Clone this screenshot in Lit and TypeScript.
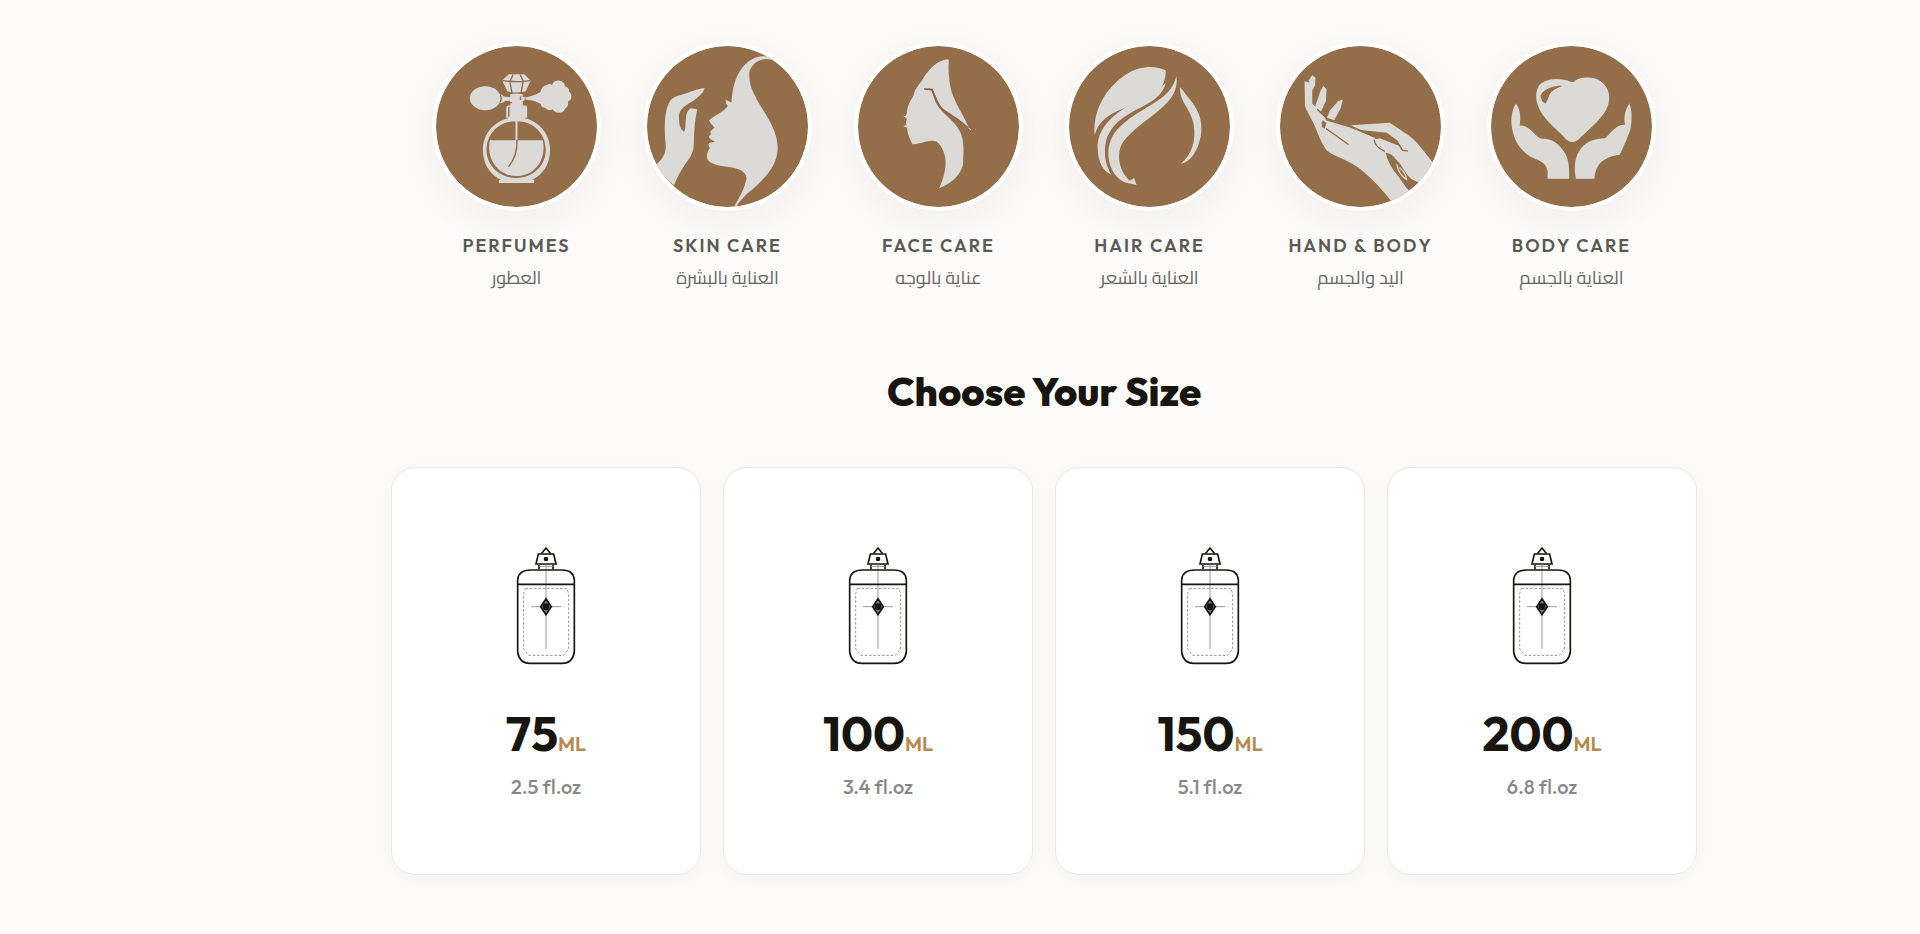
import { LitElement, html, css, svg } from "lit";
import { customElement } from "lit/decorators.js";

interface Category {
  name: string;
  arabic: string;
  viewBox: string;
  art: unknown;
}

const perfume = svg`
  <path class="ink" d="M268 132H314L334 151L318 184Q291 189 264 184L248 151Z"/>
  <path class="cut" d="M249 151Q291 157 333 151M281 133L271 153L277 186M302 133L311 153L305 186" stroke-width="4"/>
  <ellipse class="ink" cx="197" cy="204" rx="46" ry="36"/>
  <path class="ink" d="M238 194Q247 190 251 197Q256 201 272 200V192Q291 188 310 192V200L316 200V209L310 212V226H320Q323 228 323 233V262Q291 268 260 262V233Q260 227 266 226H272V212Q256 211 252 216Q244 222 238 214Z"/>
  <path class="cut" d="M242 195Q248 204 242 215M268 230V260M272 217H278M303 199V209" stroke-width="4"/>
  <path class="ink" d="M317 202Q345 196 363 185Q368 164 383 164Q390 158 398 164Q402 151 418 151Q434 153 437 168Q450 172 449 183Q457 190 456 200Q454 211 446 213Q448 229 438 234Q434 248 418 248Q405 247 400 237Q386 245 377 233Q365 231 364 221Q345 210 318 208Z"/>
  <path class="ink" fill-rule="evenodd" d="M264 264Q291 259 318 264C363 277 392 314 392 359C392 400 372 434 338 449H344V459H238V449H244C210 434 190 400 190 359C190 314 219 277 264 264ZM289 273C238 273 201 310 201 360C201 406 239 444 290 444C341 444 379 406 379 360C379 310 342 273 293 273Z"/>
  <path class="ink" d="M211 330H370C382 387 346 438 291 438C236 438 199 387 211 330Z"/>
  <path class="line" d="M291 264V332" stroke-width="6"/>
  <path class="cut" d="M292 329C294 360 285 389 267 410" stroke-width="4"/>
`;

const skin = svg`
  <path class="ink" d="M224 173C221 188 207 199 189 212C166 226 147 235 147 260C147 282 150 296 162 305C168 296 166 282 168 264C169 247 175 238 184 234L202 237C196 267 193 294 192 326C193 352 189 371 177 387C157 414 144 437 132 466L70 410C96 391 110 370 107 342C103 304 103 257 112 231C119 207 132 200 148 196C174 187 197 177 224 173Z"/>
  <path class="ink" d="M430 90C393 77 366 100 359 124C356 151 364 175 376 197C394 239 443 289 444 354C444 410 397 454 357 487C342 500 329 515 319 530L312 532C329 501 344 477 350 446C350 421 322 414 291 410C265 406 242 402 233 388C228 376 234 363 240 354L235 344L239 338L256 335L240 326L237 319L243 312L241 305L254 292L245 282L237 271C249 257 284 244 294 227L287 216L290 215L286 208L305 217C307 187 312 153 328 126C348 91 385 67 424 82Z"/>
`;

const face = svg`
  <path class="ink" d="M323 87C294 91 270 112 249 146C237 165 225 175 222 193C219 203 208 215 206 224C201 235 202 248 198 257L190 258L201 265L198 278L200 284L190 288L202 293C201 306 209 326 218 342C239 343 258 332 275 332C295 330 306 350 313 370C324 402 313 440 298 475C330 462 358 441 369 407C372 370 374 332 361 305C344 269 304 250 288 217C282 205 280 190 275 180L252 176L277 175C292 201 295 227 314 239C339 256 364 270 388 294C370 252 340 211 332 171C327 145 325 118 327 89Z"/>
  <path class="line" d="M335 259Q364 278 394 299" stroke-width="3"/>
  <path class="cut" d="M253 176L276 178C288 204 292 226 313 242C335 259 358 273 386 294" stroke-width="5"/>
`;

const hair = svg`
  <path class="ink" d="M348 121C318 105 270 106 229 132C173 169 128 234 134 315C144 281 163 261 201 243C241 223 291 215 325 185C339 170 348 146 348 121Z"/>
  <path class="ink" d="M348 157C318 192 277 202 228 231C181 260 141 301 143 354C145 399 159 423 184 434C170 409 162 382 166 347C171 301 203 270 248 245C297 219 337 203 348 157Z"/>
  <path class="ink" d="M380 137C371 176 346 198 307 222C255 253 196 286 180 337C166 382 184 440 226 457L260 465L253 444L240 452C203 420 200 364 220 335C246 299 294 269 331 237C364 210 386 178 380 137Z"/>
  <path class="ink" d="M391 170C388 215 424 235 432 284C439 333 427 373 393 401C424 395 445 360 453 318C463 258 435 226 411 196Z"/>
`;

const hand = svg`
  <path class="ink" d="M135 153L158 159L158 220L194 257L200 271L273 293L345 322C366 330 390 336 410 351C387 368 389 388 403 411C421 437 438 461 449 484L397 515C371 482 341 449 306 420C273 391 228 382 202 361C189 344 183 330 171 301C161 271 145 252 136 227Z"/>
  <path class="ink" d="M147 151L158 134L168 143L166 166L159 180Z"/>
  <path class="ink" d="M166 231L182 184L191 167L201 176L199 212L187 239L181 246Z"/>
  <path class="ink" d="M202 263L211 241L236 212L250 208L243 235L224 270Z"/>
  <path class="ink" d="M275 285L391 278C419 297 450 315 472 337C495 365 510 383 527 407L487 462C462 456 446 441 431 415C419 394 399 376 379 368C363 359 341 350 344 331L357 323L424 349L414 331L382 308L290 298Z"/>
  <path class="cut" d="M344 329Q346 350 376 364M346 324L358 324M418 342L429 360L445 363M277 289L345 320" stroke-width="4"/>
  <path class="cut" d="M173 237L201 264M189 272L197 280L193 292M199 295L267 343" stroke-width="4"/>
  <path class="shade" d="M186 275L201 278L195 296L187 291Z"/>
  <path class="shade" d="M378 367Q400 371 411 390Q424 421 446 443L480 458Q458 477 443 476L416 438Q388 407 378 367Z"/>
  <path class="line" d="M412 402Q417 432 441 448Q441 430 420 412" stroke-width="4"/>
`;

const body = svg`
  <path class="ink" d="M306 155C266 139 221 146 207 170C193 197 204 230 222 256C244 285 270 304 292 329Q309 344 327 329C362 293 406 263 418 222C428 184 408 151 371 143C345 139 326 143 313 155Z"/>
  <path class="shade" d="M277 166C251 167 221 178 214 196Q215 215 229 220Q237 207 240 195C247 181 260 175 276 169Z"/>
  <path class="ink" d="M140 219C126 244 124 269 128 292C135 336 154 360 184 380C206 391 230 394 235 423V446H300C300 417 301 387 283 363C262 330 239 326 214 325C190 312 180 285 151 286C156 260 152 237 140 219Z"/>
  <path class="ink" d="M481 219C469 238 463 259 468 284C443 282 430 304 408 324C377 324 344 335 329 365C315 389 315 419 320 446H376C378 417 389 397 408 388C424 378 440 375 452 374C462 354 475 323 484 298C490 267 489 242 481 219Z"/>
`;

const CATEGORIES: Category[] = [
  { name: "PERFUMES", arabic: "العطور", viewBox: "49 47 484 484", art: perfume },
  { name: "SKIN CARE", arabic: "العناية بالبشرة", viewBox: "51 47 484 484", art: skin },
  { name: "FACE CARE", arabic: "عناية بالوجه", viewBox: "54 47 484 484", art: face },
  { name: "HAIR CARE", arabic: "العناية بالشعر", viewBox: "57 47 484 484", art: hair },
  { name: "HAND & BODY", arabic: "اليد والجسم", viewBox: "61 47 484 484", art: hand },
  { name: "BODY CARE", arabic: "العناية بالجسم", viewBox: "65 47 484 484", art: body },
];

const SIZES = [
  { ml: 75, oz: "2.5" },
  { ml: 100, oz: "3.4" },
  { ml: 150, oz: "5.1" },
  { ml: 200, oz: "6.8" },
];

@customElement("category-link")
export class CategoryLink extends LitElement {
  static properties = { category: { attribute: false } };
  declare category: Category;

  static styles = css`
    :host { display: block; }
    .link {
      display: flex;
      flex-direction: column;
      align-items: center;
      color: #5c5953;
      text-decoration: none;
      white-space: nowrap;
    }
    .disc {
      box-sizing: border-box;
      width: 100%;
      aspect-ratio: 1;
      overflow: hidden;
      border: 4px solid #fff;
      border-radius: 50%;
      background: #946d49;
      background-clip: padding-box;
      box-shadow: 0 10px 40px rgba(0, 0, 0, 0.05);
    }
    .art { display: block; width: 100%; height: 100%; }
    .ink { fill: #dcdad6; }
    .shade { fill: #946d49; }
    .line { fill: none; stroke: #dcdad6; }
    .cut { fill: none; stroke: #8b6748; }
    .name {
      margin-top: 24px;
      font-size: 18px;
      font-weight: 600;
      line-height: 22px;
      letter-spacing: 2px;
    }
    .arabic {
      margin-top: 9px;
      font-family: Cairo, "DejaVu Sans", sans-serif;
      font-size: 18px;
      line-height: 24px;
      color: #68655f;
    }
  `;

  render() {
    const c = this.category;
    return html`
      <a class="link" href="#">
        <span class="disc"><svg class="art" viewBox=${c.viewBox} aria-hidden="true">${c.art}</svg></span>
        <span class="name">${c.name}</span>
        <span class="arabic" lang="ar" dir="rtl">${c.arabic}</span>
      </a>
    `;
  }
}

@customElement("size-card")
export class SizeCard extends LitElement {
  static properties = { ml: { type: Number }, oz: { type: String } };
  declare ml: number;
  declare oz: string;

  static styles = css`
    :host { display: block; }
    .card {
      box-sizing: border-box;
      display: flex;
      flex-direction: column;
      align-items: center;
      width: 100%;
      padding: 78px 16px 73px;
      border: 1px solid #ebe9e5;
      border-radius: 24px;
      background: #fff;
      box-shadow: 0 4px 20px rgba(0, 0, 0, 0.03);
      font: inherit;
      cursor: pointer;
    }
    .bottle { display: block; width: 60px; height: 120px; }
    .volume {
      display: flex;
      align-items: baseline;
      margin-top: 39px;
      line-height: 56px;
    }
    .amount { font-size: 48px; font-weight: 700; color: #17150e; }
    .unit { font-size: 20px; font-weight: 600; line-height: 20px; color: #b58a4c; }
    .ounces {
      margin-top: 12px;
      font-size: 20px;
      font-weight: 500;
      font-variant-ligatures: none;
      line-height: 28px;
      color: #888787;
    }
  `;

  render() {
    return html`
      <button class="card" type="button">
        <svg class="bottle" viewBox="78 45 180 360" fill="none" stroke="#17150e" stroke-width="5" aria-hidden="true">
          <path d="M154 68L168 51L182 68" stroke-linejoin="round"/>
          <path d="M145 69H191L198 99H138Z"/>
          <circle cx="168" cy="84" r="7" fill="#17150e" stroke="none"/>
          <path d="M147 101V115M189 101V115"/>
          <path d="M147 106H189" stroke="#999" stroke-width="3"/>
          <path d="M168 101V354M123 227H213" stroke="#999" stroke-width="3"/>
          <path d="M83 159V146Q86 117 122 117H216Q250 117 253 146V362Q249 397 216 397H120Q87 397 83 362ZM83 160H253"/>
          <path d="M106 172H230L236 188V354L220 373H116L101 354V188Z" stroke="#999" stroke-width="3" stroke-dasharray="8 5"/>
          <path d="M168 203L184 227L168 251L152 227Z" fill="#77736b"/>
          <circle cx="168" cy="227" r="10" fill="#17150e" stroke="none"/>
        </svg>
        <span class="volume"><span class="amount">${this.ml}</span><span class="unit">ML</span></span>
        <span class="ounces">${this.oz} fl.oz</span>
      </button>
    `;
  }
}

@customElement("app-root")
export class AppRoot extends LitElement {
  static styles = css`
    :host {
      display: block;
      box-sizing: border-box;
      min-height: 100vh;
      padding: 42px 24px 59px 192px;
      background: #fcfbf9;
      font-family: Outfit, Lato, sans-serif;
    }
    .categories {
      display: grid;
      grid-template-columns: repeat(6, minmax(0, 169px));
      justify-content: center;
      gap: 42px;
    }
    .title {
      margin: 75px 0 50px;
      text-align: center;
      font-size: 40px;
      font-weight: 800;
      line-height: 52px;
      color: #17150e;
    }
    .sizes {
      display: grid;
      grid-template-columns: repeat(4, minmax(0, 1fr));
      gap: 22px;
      max-width: 1306px;
      margin: 0 auto;
    }
  `;

  render() {
    return html`
      <nav class="categories" aria-label="Categories">
        ${CATEGORIES.map((c) => html`<category-link .category=${c}></category-link>`)}
      </nav>
      <h2 class="title">Choose Your Size</h2>
      <section class="sizes" aria-label="Sizes">
        ${SIZES.map((s) => html`<size-card .ml=${s.ml} .oz=${s.oz}></size-card>`)}
      </section>
    `;
  }
}
